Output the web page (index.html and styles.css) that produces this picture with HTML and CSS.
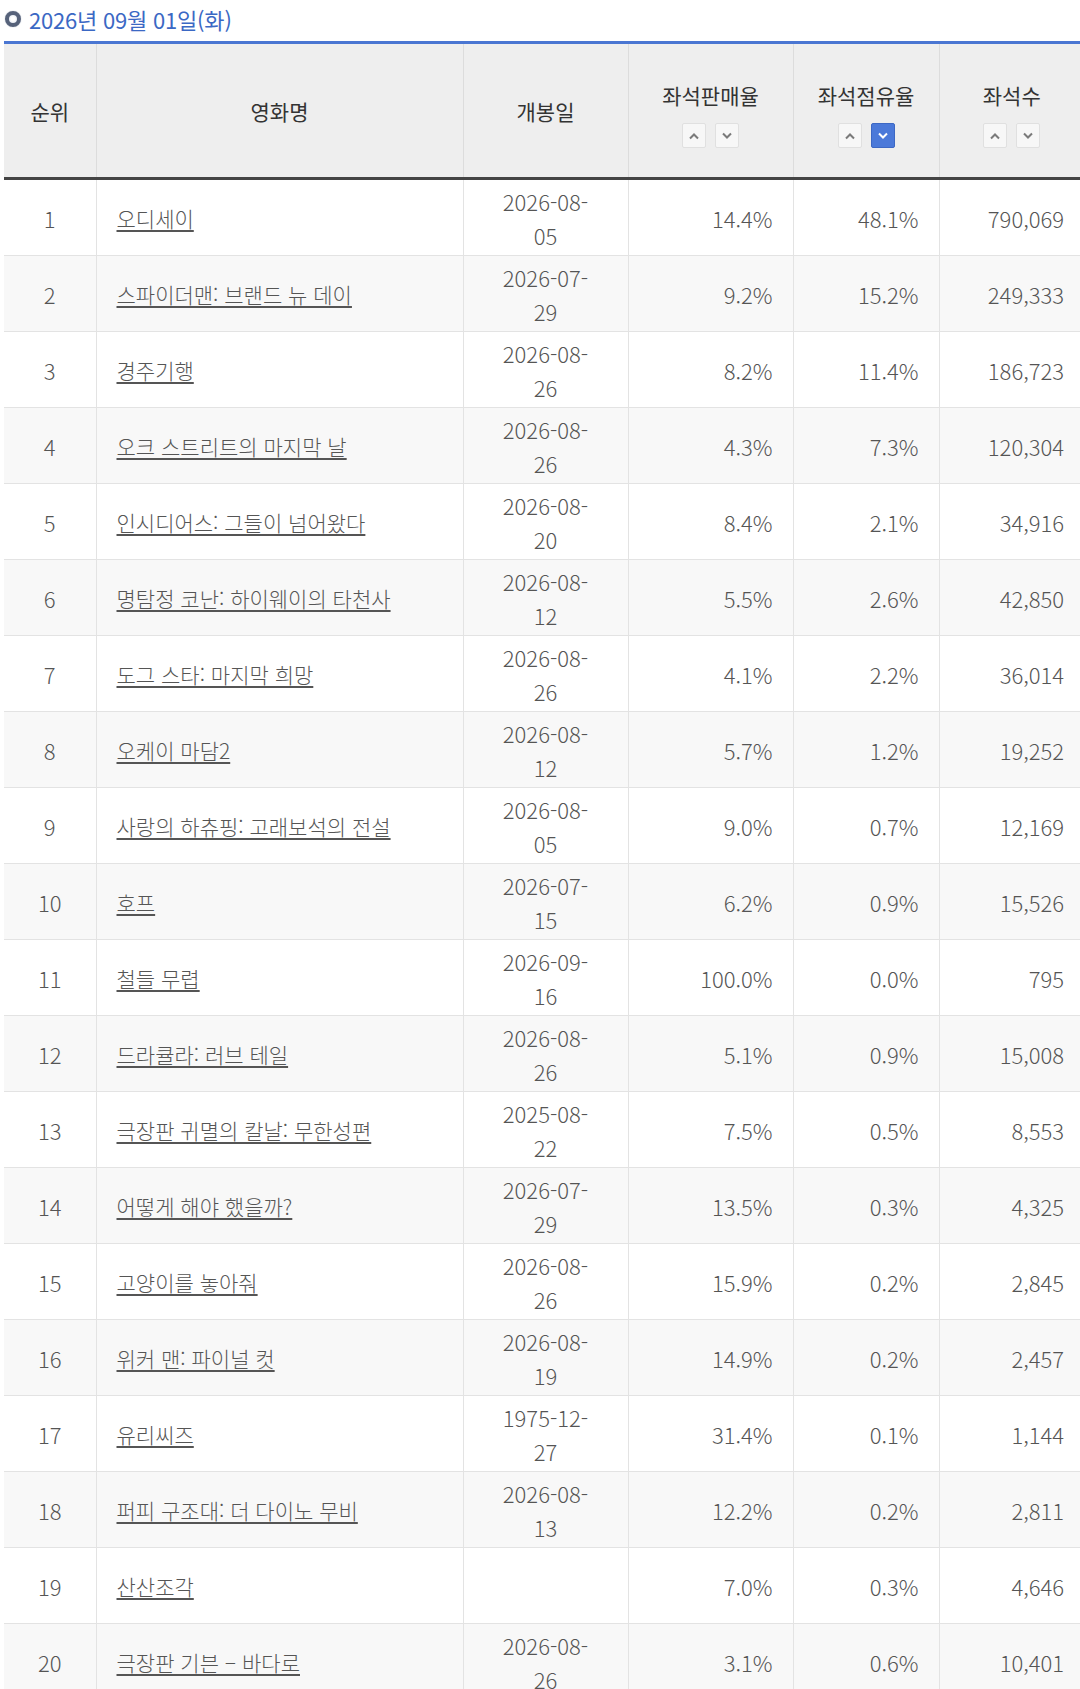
FILE: index.html
```html
<!DOCTYPE html>
<html lang="ko">
<head>
<meta charset="utf-8">
<title>좌석점유율</title>
<link rel="stylesheet" href="styles.css">
</head>
<body>
<div class="page">
  <h2 class="title"><span class="bullet"></span>2026년 09월 01일(화)</h2>
  <table class="rank">
    <colgroup>
      <col class="c-rank"><col class="c-name"><col class="c-date"><col class="c-sale"><col class="c-share"><col class="c-seat">
    </colgroup>
    <thead>
      <tr>
        <th>순위</th>
        <th>영화명</th>
        <th>개봉일</th>
        <th><div class="hd"><span>좌석판매율</span><div class="btns"><span class="sb"><svg viewBox="0 0 12 8"><polyline points="2,6.5 6,2.5 10,6.5"/></svg></span><span class="sb"><svg viewBox="0 0 12 8"><polyline points="2,1.5 6,5.5 10,1.5"/></svg></span></div></div></th>
        <th><div class="hd"><span>좌석점유율</span><div class="btns"><span class="sb"><svg viewBox="0 0 12 8"><polyline points="2,6.5 6,2.5 10,6.5"/></svg></span><span class="sb on"><svg viewBox="0 0 12 8"><polyline points="2,1.5 6,5.5 10,1.5"/></svg></span></div></div></th>
        <th><div class="hd"><span>좌석수</span><div class="btns"><span class="sb"><svg viewBox="0 0 12 8"><polyline points="2,6.5 6,2.5 10,6.5"/></svg></span><span class="sb"><svg viewBox="0 0 12 8"><polyline points="2,1.5 6,5.5 10,1.5"/></svg></span></div></div></th>
      </tr>
    </thead>
    <tbody>
      <tr><td class="num-c">1</td><td class="name"><a href="#">오디세이</a></td><td class="date"><span>2026-08-05</span></td><td class="num">14.4%</td><td class="num">48.1%</td><td class="num">790,069</td></tr>
      <tr><td class="num-c">2</td><td class="name"><a href="#">스파이더맨: 브랜드 뉴 데이</a></td><td class="date"><span>2026-07-29</span></td><td class="num">9.2%</td><td class="num">15.2%</td><td class="num">249,333</td></tr>
      <tr><td class="num-c">3</td><td class="name"><a href="#">경주기행</a></td><td class="date"><span>2026-08-26</span></td><td class="num">8.2%</td><td class="num">11.4%</td><td class="num">186,723</td></tr>
      <tr><td class="num-c">4</td><td class="name"><a href="#">오크 스트리트의 마지막 날</a></td><td class="date"><span>2026-08-26</span></td><td class="num">4.3%</td><td class="num">7.3%</td><td class="num">120,304</td></tr>
      <tr><td class="num-c">5</td><td class="name"><a href="#">인시디어스: 그들이 넘어왔다</a></td><td class="date"><span>2026-08-20</span></td><td class="num">8.4%</td><td class="num">2.1%</td><td class="num">34,916</td></tr>
      <tr><td class="num-c">6</td><td class="name"><a href="#">명탐정 코난: 하이웨이의 타천사</a></td><td class="date"><span>2026-08-12</span></td><td class="num">5.5%</td><td class="num">2.6%</td><td class="num">42,850</td></tr>
      <tr><td class="num-c">7</td><td class="name"><a href="#">도그 스타: 마지막 희망</a></td><td class="date"><span>2026-08-26</span></td><td class="num">4.1%</td><td class="num">2.2%</td><td class="num">36,014</td></tr>
      <tr><td class="num-c">8</td><td class="name"><a href="#">오케이 마담2</a></td><td class="date"><span>2026-08-12</span></td><td class="num">5.7%</td><td class="num">1.2%</td><td class="num">19,252</td></tr>
      <tr><td class="num-c">9</td><td class="name"><a href="#">사랑의 하츄핑: 고래보석의 전설</a></td><td class="date"><span>2026-08-05</span></td><td class="num">9.0%</td><td class="num">0.7%</td><td class="num">12,169</td></tr>
      <tr><td class="num-c">10</td><td class="name"><a href="#">호프</a></td><td class="date"><span>2026-07-15</span></td><td class="num">6.2%</td><td class="num">0.9%</td><td class="num">15,526</td></tr>
      <tr><td class="num-c">11</td><td class="name"><a href="#">철들 무렵</a></td><td class="date"><span>2026-09-16</span></td><td class="num">100.0%</td><td class="num">0.0%</td><td class="num">795</td></tr>
      <tr><td class="num-c">12</td><td class="name"><a href="#">드라큘라: 러브 테일</a></td><td class="date"><span>2026-08-26</span></td><td class="num">5.1%</td><td class="num">0.9%</td><td class="num">15,008</td></tr>
      <tr><td class="num-c">13</td><td class="name"><a href="#">극장판 귀멸의 칼날: 무한성편</a></td><td class="date"><span>2025-08-22</span></td><td class="num">7.5%</td><td class="num">0.5%</td><td class="num">8,553</td></tr>
      <tr><td class="num-c">14</td><td class="name"><a href="#">어떻게 해야 했을까?</a></td><td class="date"><span>2026-07-29</span></td><td class="num">13.5%</td><td class="num">0.3%</td><td class="num">4,325</td></tr>
      <tr><td class="num-c">15</td><td class="name"><a href="#">고양이를 놓아줘</a></td><td class="date"><span>2026-08-26</span></td><td class="num">15.9%</td><td class="num">0.2%</td><td class="num">2,845</td></tr>
      <tr><td class="num-c">16</td><td class="name"><a href="#">위커 맨: 파이널 컷</a></td><td class="date"><span>2026-08-19</span></td><td class="num">14.9%</td><td class="num">0.2%</td><td class="num">2,457</td></tr>
      <tr><td class="num-c">17</td><td class="name"><a href="#">유리씨즈</a></td><td class="date"><span>1975-12-27</span></td><td class="num">31.4%</td><td class="num">0.1%</td><td class="num">1,144</td></tr>
      <tr><td class="num-c">18</td><td class="name"><a href="#">퍼피 구조대: 더 다이노 무비</a></td><td class="date"><span>2026-08-13</span></td><td class="num">12.2%</td><td class="num">0.2%</td><td class="num">2,811</td></tr>
      <tr><td class="num-c">19</td><td class="name"><a href="#">산산조각</a></td><td class="date"></td><td class="num">7.0%</td><td class="num">0.3%</td><td class="num">4,646</td></tr>
      <tr><td class="num-c">20</td><td class="name"><a href="#">극장판 기븐 – 바다로</a></td><td class="date"><span>2026-08-26</span></td><td class="num">3.1%</td><td class="num">0.6%</td><td class="num">10,401</td></tr>
    </tbody>
  </table>
</div>
</body>
</html>
```

FILE: styles.css
```css
html, body {
  margin: 0;
  padding: 0;
  background: #ffffff;
}
body {
  font-family: "Noto Sans CJK KR", "Noto Sans", sans-serif;
  overflow: hidden;
}
.page {
  padding-left: 4px;
  width: 1080px;
}
.title {
  margin: 0;
  height: 44px;
  box-sizing: border-box;
  padding: 0 0 3px 1px;
  display: flex;
  align-items: center;
  gap: 8px;
  font-size: 22px;
  font-weight: 400;
  color: #3b68c4;
  letter-spacing: -0.2px;
  border-bottom: 3px solid #4a76d2;
}
.bullet {
  width: 16px;
  height: 16px;
  border-radius: 50%;
  box-sizing: border-box;
  border: 4px solid #56627a;
  background: radial-gradient(circle, #ffffff 35%, #d8e0ec 100%);
  box-shadow: 0 0 1px #8894aa;
}
.rank {
  width: 1080px;
  border-collapse: collapse;
  table-layout: fixed;
  color: #555;
  font-size: 21px;
}
.c-rank { width: 92px; }
.c-name { width: 367px; }
.c-date { width: 165px; }
.c-sale { width: 165px; }
.c-share { width: 146px; }
.c-seat { width: 145px; }
.rank th {
  background: #eeeeee;
  height: 133px;
  padding: 0;
  font-weight: 400;
  color: #333;
  font-size: 21px;
  border-left: 1px solid #dcdcdc;
  border-bottom: 3px solid #444;
  vertical-align: middle;
}
.rank th:first-child { border-left: none; }
.hd {
  display: flex;
  flex-direction: column;
  align-items: center;
  padding-top: 8px;
}
.hd > span {
  line-height: 28px;
  margin-bottom: 14px;
}
.btns {
  display: flex;
  gap: 9px;
}
.sb {
  width: 24px;
  height: 25px;
  box-sizing: border-box;
  border: 1px solid #e0e0e0;
  background: #f7f7f7;
  border-radius: 2px;
  display: flex;
  align-items: center;
  justify-content: center;
}
.sb svg {
  width: 12px;
  height: 8px;
  fill: none;
  stroke: #7a7a7a;
  stroke-width: 2;
}
.sb.on {
  background: #4b79d9;
  border-color: #3d68c4;
}
.sb.on svg { stroke: #fff; }
.rank td {
  height: 75px;
  padding: 0 20px;
  line-height: 34px;
  border-left: 1px solid #e3e3e3;
  border-bottom: 1px solid #e3e3e3;
  vertical-align: middle;
  font-weight: 300;
}
.rank td:first-child { border-left: none; }
.rank tbody tr:nth-child(even) td { background: #f8f8f8; }
.num-c { text-align: center; font-size: 22px; }
.num { text-align: right; font-size: 22px; }
.date { text-align: center; font-size: 22px; }
.date span {
  display: inline-block;
  max-width: 100px;
}
.name a {
  color: #555;
  text-decoration: underline;
  text-underline-offset: 3px;
}
```
